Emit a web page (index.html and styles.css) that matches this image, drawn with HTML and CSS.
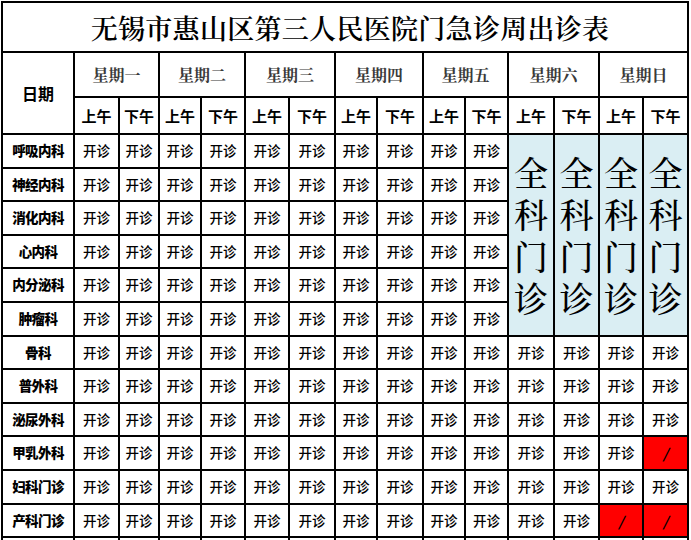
FILE: index.html
```html
<!DOCTYPE html>
<html lang="zh-CN">
<head>
<meta charset="utf-8">
<title>无锡市惠山区第三人民医院门急诊周出诊表</title>
<link rel="stylesheet" href="styles.css">
</head>
<body>
<table class="sched">
  <colgroup>
    <col class="c-label">
    <col class="w45"><col class="w40">
    <col class="w42"><col class="w44">
    <col class="w44"><col class="w46">
    <col class="w42"><col class="w46">
    <col class="w42"><col class="w43">
    <col class="w46"><col class="w45">
    <col class="w44"><col class="w45">
  </colgroup>
  <tr class="r-title"><td class="title" colspan="15">无锡市惠山区第三人民医院门急诊周出诊表</td></tr>
  <tr class="r-week">
    <td class="hd date" rowspan="2">日期</td>
    <td class="wk" colspan="2">星期一</td>
    <td class="wk" colspan="2">星期二</td>
    <td class="wk" colspan="2">星期三</td>
    <td class="wk" colspan="2">星期四</td>
    <td class="wk" colspan="2">星期五</td>
    <td class="wk" colspan="2">星期六</td>
    <td class="wk" colspan="2">星期日</td>
  </tr>
  <tr class="r-half">
    <td class="hd">上午</td><td class="hd">下午</td>
    <td class="hd">上午</td><td class="hd">下午</td>
    <td class="hd">上午</td><td class="hd">下午</td>
    <td class="hd">上午</td><td class="hd">下午</td>
    <td class="hd">上午</td><td class="hd">下午</td>
    <td class="hd">上午</td><td class="hd">下午</td>
    <td class="hd">上午</td><td class="hd">下午</td>
  </tr>
  <tr class="r-a">
    <td class="lb">呼吸内科</td>
    <td>开诊</td><td>开诊</td><td>开诊</td><td>开诊</td><td>开诊</td>
    <td>开诊</td><td>开诊</td><td>开诊</td><td>开诊</td><td>开诊</td>
    <td class="gp" rowspan="6"><span class="vt">全科门诊</span></td>
    <td class="gp" rowspan="6"><span class="vt">全科门诊</span></td>
    <td class="gp" rowspan="6"><span class="vt">全科门诊</span></td>
    <td class="gp" rowspan="6"><span class="vt">全科门诊</span></td>
  </tr>
  <tr class="r-b">
    <td class="lb">神经内科</td>
    <td>开诊</td><td>开诊</td><td>开诊</td><td>开诊</td><td>开诊</td>
    <td>开诊</td><td>开诊</td><td>开诊</td><td>开诊</td><td>开诊</td>
  </tr>
  <tr class="r-a">
    <td class="lb">消化内科</td>
    <td>开诊</td><td>开诊</td><td>开诊</td><td>开诊</td><td>开诊</td>
    <td>开诊</td><td>开诊</td><td>开诊</td><td>开诊</td><td>开诊</td>
  </tr>
  <tr class="r-b">
    <td class="lb">心内科</td>
    <td>开诊</td><td>开诊</td><td>开诊</td><td>开诊</td><td>开诊</td>
    <td>开诊</td><td>开诊</td><td>开诊</td><td>开诊</td><td>开诊</td>
  </tr>
  <tr class="r-a">
    <td class="lb">内分泌科</td>
    <td>开诊</td><td>开诊</td><td>开诊</td><td>开诊</td><td>开诊</td>
    <td>开诊</td><td>开诊</td><td>开诊</td><td>开诊</td><td>开诊</td>
  </tr>
  <tr class="r-a">
    <td class="lb">肿瘤科</td>
    <td>开诊</td><td>开诊</td><td>开诊</td><td>开诊</td><td>开诊</td>
    <td>开诊</td><td>开诊</td><td>开诊</td><td>开诊</td><td>开诊</td>
  </tr>
  <tr class="r-b">
    <td class="lb">骨科</td>
    <td>开诊</td><td>开诊</td><td>开诊</td><td>开诊</td><td>开诊</td>
    <td>开诊</td><td>开诊</td><td>开诊</td><td>开诊</td><td>开诊</td>
    <td>开诊</td><td>开诊</td><td>开诊</td><td>开诊</td>
  </tr>
  <tr class="r-a">
    <td class="lb">普外科</td>
    <td>开诊</td><td>开诊</td><td>开诊</td><td>开诊</td><td>开诊</td>
    <td>开诊</td><td>开诊</td><td>开诊</td><td>开诊</td><td>开诊</td>
    <td>开诊</td><td>开诊</td><td>开诊</td><td>开诊</td>
  </tr>
  <tr class="r-b">
    <td class="lb">泌尿外科</td>
    <td>开诊</td><td>开诊</td><td>开诊</td><td>开诊</td><td>开诊</td>
    <td>开诊</td><td>开诊</td><td>开诊</td><td>开诊</td><td>开诊</td>
    <td>开诊</td><td>开诊</td><td>开诊</td><td>开诊</td>
  </tr>
  <tr class="r-a">
    <td class="lb">甲乳外科</td>
    <td>开诊</td><td>开诊</td><td>开诊</td><td>开诊</td><td>开诊</td>
    <td>开诊</td><td>开诊</td><td>开诊</td><td>开诊</td><td>开诊</td>
    <td>开诊</td><td>开诊</td><td>开诊</td><td class="off">/</td>
  </tr>
  <tr class="r-a">
    <td class="lb">妇科门诊</td>
    <td>开诊</td><td>开诊</td><td>开诊</td><td>开诊</td><td>开诊</td>
    <td>开诊</td><td>开诊</td><td>开诊</td><td>开诊</td><td>开诊</td>
    <td>开诊</td><td>开诊</td><td>开诊</td><td>开诊</td>
  </tr>
  <tr class="r-b">
    <td class="lb">产科门诊</td>
    <td>开诊</td><td>开诊</td><td>开诊</td><td>开诊</td><td>开诊</td>
    <td>开诊</td><td>开诊</td><td>开诊</td><td>开诊</td><td>开诊</td>
    <td>开诊</td><td>开诊</td><td class="off">/</td><td class="off">/</td>
  </tr>
  <tr class="r-a">
    <td class="lb">&nbsp;</td>
    <td></td><td></td><td></td><td></td><td></td>
    <td></td><td></td><td></td><td></td><td></td>
    <td></td><td></td><td></td><td></td>
  </tr>
</table>
</body>
</html>
```
FILE: styles.css
```css
html, body {
  margin: 0;
  padding: 0;
  background: #fff;
  overflow: hidden;
}
body {
  padding: 1px 0 0 1px;
  font-family: "Noto Sans CJK SC", "Noto Sans", sans-serif;
  color: #000;
}
.sched {
  border-collapse: collapse;
  table-layout: fixed;
  width: 688px;
}
.sched td {
  border: 2px solid #000;
  padding: 0;
  text-align: center;
  vertical-align: middle;
  font-size: 13.5px;
  font-weight: 500;
  line-height: 1;
  white-space: nowrap;
  overflow: hidden;
}
.c-label { width: 72px; }
.w40 { width: 40px; }
.w42 { width: 42px; }
.w43 { width: 43px; }
.w44 { width: 44px; }
.w45 { width: 45px; }
.w46 { width: 46px; }

.r-title { height: 50px; }
.r-week { height: 45px; }
.r-half { height: 37px; }
.r-a { height: 34px; }
.r-b { height: 33px; }

.sched td.title {
  font-family: "Noto Serif CJK SC", "Noto Serif", "Noto Sans CJK SC", serif;
  font-size: 27px;
  font-weight: 600;
  letter-spacing: 0.3px;
  padding-left: 10px;
}
.sched td.wk {
  font-family: "Noto Serif CJK SC", "Noto Sans CJK SC", serif;
  font-size: 16px;
  font-weight: 700;
  color: #3a3a3a;
}
.sched td.hd {
  font-size: 15px;
  font-weight: 700;
}
.sched td.date {
  font-size: 16px;
}
.sched td.lb {
  font-size: 13.5px;
  font-weight: 900;
  letter-spacing: -0.6px;
}
.sched td.gp {
  background: #daeef3;
  white-space: normal;
}
.vt {
  display: inline-block;
  width: 1em;
  font-family: "Noto Serif CJK SC", "Noto Sans CJK SC", serif;
  font-size: 34px;
  font-weight: 500;
  line-height: 42px;
  white-space: normal;
  word-break: break-all;
}
.sched td.off {
  background: #ff0000;
  font-size: 14px;
  font-style: italic;
  font-weight: 700;
}
```
